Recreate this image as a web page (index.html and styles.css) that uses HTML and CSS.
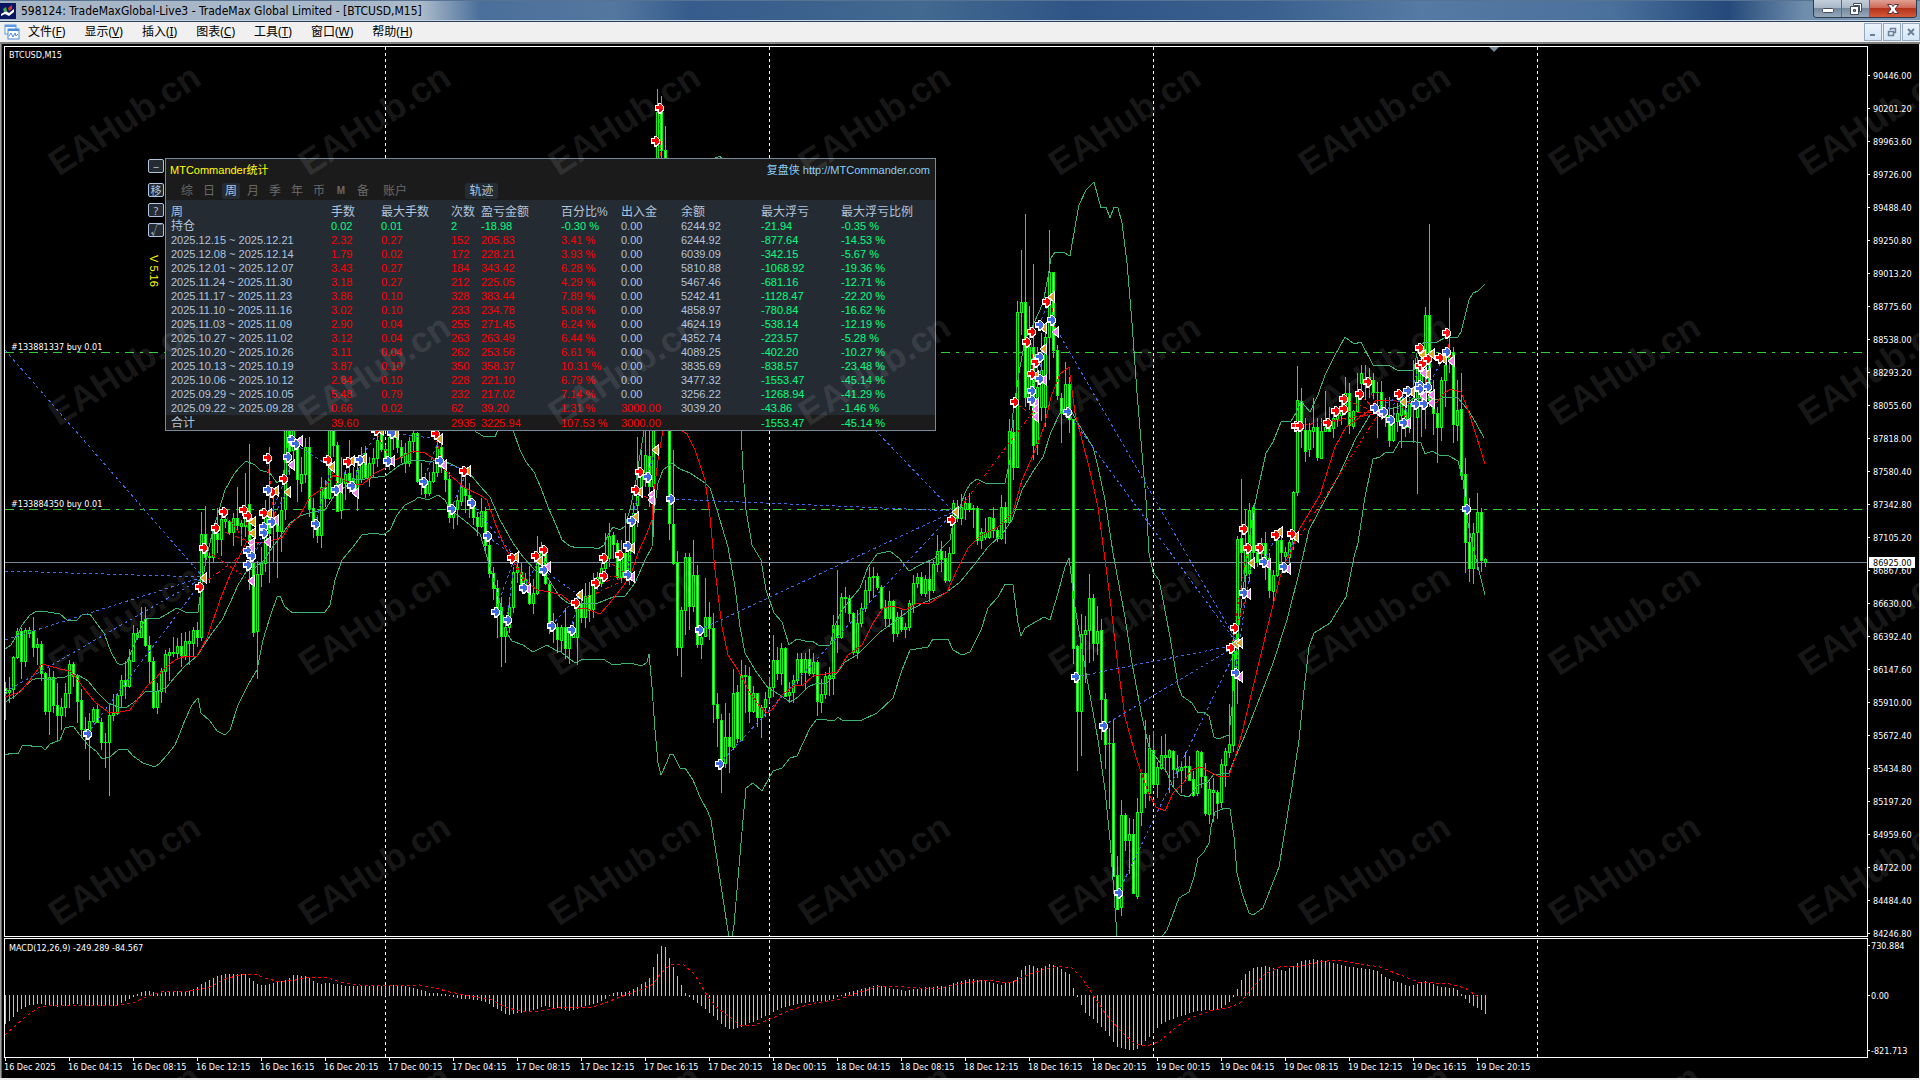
FILE: index.html
```html
<!DOCTYPE html>
<html lang="zh-CN">
<head>
<meta charset="utf-8">
<title>598124: TradeMaxGlobal-Live3 - TradeMax Global Limited - [BTCUSD,M15]</title>
<link rel="stylesheet" href="styles.css">
</head>
<body>
<header class="titlebar">
  <svg class="app-icon" width="16" height="16" viewBox="0 0 16 16" aria-hidden="true"><rect width="16" height="16" fill="#0b1560"/><path d="M1 11l5-3 3 2 5-4v3l-5 4-4-2-4 2z" fill="#fff"/><path d="M3 6l3-2 1 4-3 1z" fill="#3fb54a"/><path d="M8 5l4-3v4l-3 2z" fill="#d33"/></svg>
  <h1 class="title">598124: TradeMaxGlobal-Live3 - TradeMax Global Limited - [BTCUSD,M15]</h1>
  <div class="win-buttons">
    <button class="win-btn" aria-label="最小化"><svg width="14" height="14" viewBox="0 0 14 14"><rect x="1.500" y="6.500" width="11" height="4" rx="1" fill="#fff" stroke="#444b5c"/></svg></button>
    <button class="win-btn" aria-label="还原"><svg width="14" height="14" viewBox="0 0 14 14"><path d="M4.500 1.500h8v8h-2v-6h-6z" fill="#fff" stroke="#444b5c"/><path d="M1.500 4.500h8v8h-8zM4.500 7.500v2h2v-2z" fill="#fff" fill-rule="evenodd" stroke="#444b5c"/></svg></button>
    <button class="win-btn win-close" aria-label="关闭"><svg width="14" height="14" viewBox="0 0 14 14"><path d="M1.500 2.500h4L7 4.500l1.500-2h4L9 7l3.500 4.500h-4L7 9.500l-1.500 2h-4L5 7z" fill="#fff" stroke="#4a3540"/></svg></button>
  </div>
</header>
<nav class="menubar">
  <svg class="doc-icon" width="16" height="16" viewBox="0 0 16 16" aria-hidden="true"><rect x="1" y="1" width="11" height="9" fill="#fff" stroke="#5a9ae0"/><path d="M1 2h11" stroke="#5a9ae0" stroke-width="2"/><rect x="4" y="5" width="11" height="10" fill="#fff" stroke="#4a8cd8"/><path d="M4 6h11" stroke="#4a8cd8" stroke-width="2"/><path d="M5 12l2-3 2 4 2-4 1 3 2-2" fill="none" stroke="#4a8cd8"/></svg>
  <button class="menu">文件(<u>F</u>)</button>
  <button class="menu">显示(<u>V</u>)</button>
  <button class="menu">插入(<u>I</u>)</button>
  <button class="menu">图表(<u>C</u>)</button>
  <button class="menu">工具(<u>T</u>)</button>
  <button class="menu">窗口(<u>W</u>)</button>
  <button class="menu">帮助(<u>H</u>)</button>
  <div class="mdi-buttons">
    <button class="mdi-btn" aria-label="最小化图表"><svg width="10" height="10" viewBox="0 0 10 10"><path d="M2 8h5" stroke="#6b8096" stroke-width="2"/></svg></button>
    <button class="mdi-btn" aria-label="还原图表"><svg width="10" height="10" viewBox="0 0 10 10"><path d="M3.500 3V1.500h5v4H7M1.500 4.500h5v4h-5z" fill="none" stroke="#6b8096" stroke-width="1.500"/></svg></button>
    <button class="mdi-btn" aria-label="关闭图表"><svg width="10" height="10" viewBox="0 0 10 10"><path d="M2 2l6 6M8 2L2 8" stroke="#6b8096" stroke-width="2"/></svg></button>
  </div>
</nav>
<main class="workspace">
  <svg id="chart" class="chart" viewBox="0 44 1920 1036" role="img" aria-label="BTCUSD M15"></svg>
  <aside class="side-tools">
    <button class="tool">−</button>
    <button class="tool tool-move">移</button>
    <button class="tool">?</button>
    <button class="tool">√</button>
    <span class="version">V 5.16</span>
  </aside>
  <section class="panel">
    <div class="panel-head">
      <h2 class="panel-title">MTCommander统计</h2>
      <a class="panel-link" href="http://MTCommander.com">复盘侠 http://MTCommander.com</a>
    </div>
    <div class="tabs">
      <button class="tab">综</button><button class="tab">日</button><button class="tab tab-on">周</button><button class="tab">月</button><button class="tab">季</button><button class="tab">年</button><button class="tab">币</button><button class="tab tab-latin">M</button><button class="tab">备</button><button class="tab tab-wide">账户</button>
      <button class="tab tab-on tab-track">轨迹</button>
    </div>
    <table class="stats">
      <colgroup><col class="w160"><col class="w50"><col class="w70"><col class="w30"><col class="w80"><col class="w60"><col class="w60"><col class="w80"><col class="w80"><col></colgroup>
      <thead><tr><th>周</th><th>手数</th><th>最大手数</th><th>次数</th><th>盈亏金额</th><th>百分比%</th><th>出入金</th><th>余额</th><th>最大浮亏</th><th>最大浮亏比例</th></tr></thead>
      <tbody id="stats-body"></tbody>
      <tfoot><tr><td>合计</td><td class="up">39.60</td><td></td><td class="up">2935</td><td class="up">3225.94</td><td class="up">107.53 %</td><td class="up">3000.00</td><td></td><td class="down">-1553.47</td><td class="down">-45.14 %</td></tr></tfoot>
    </table>
  </section>
  <svg id="watermark" class="watermark" viewBox="0 44 1920 1036" aria-hidden="true"></svg>
</main>
<script src="chart.js"></script>
</body>
</html>
```
FILE: styles.css
```css
* { box-sizing: border-box; }
body {
  margin: 0;
  background: #000;
  font-family: "Noto Sans", "Noto Sans CJK SC", sans-serif;
  font-size: 12px;
  overflow-x: hidden;
}
button { font: inherit; padding: 0; border: 0; background: none; cursor: pointer; }

.titlebar {
  display: flex;
  align-items: center;
  height: 22px;
  border-bottom: 1px solid #2b3f58;
  box-shadow: inset 0 -1px #c5d3e2, inset 0 1px #587391;
  background: linear-gradient(90deg, #a5b5c6 0, #a9b9ca 22%, #4a6f9a 25%, #54779f 32%, #355c8c 36%, #42698f 48%, #2f5587 56%, #3a608f 66%, #557aa3 74%, #4a709c 84%, #24497a 90%, #6f8eac 94%, #7c98b3 100%);
}
.app-icon { margin-right: 5px; }
.title { flex: 1; margin: 0; font: 400 12px/20px "DejaVu Sans Condensed", "DejaVu Sans", sans-serif; color: #000; white-space: nowrap; }
.win-buttons { display: flex; align-self: flex-start; height: 18px; margin-right: 3px; border: 1px solid #2c3b4f; border-top: 0; border-radius: 0 0 4px 4px; overflow: hidden; }
.win-btn { display: flex; align-items: center; justify-content: center; width: 28px; border-right: 1px solid #5a6c80; background: linear-gradient(#c3cfdb, #a9b8c8 45%, #75899f 50%, #96a8ba); }
.win-close { width: 46px; border-right: 0; background: linear-gradient(#dfa093, #d0695a 45%, #b3331b 50%, #d4583a); }

.menubar { display: flex; align-items: center; height: 22px; padding-left: 4px; background: #f0f0f0; border-bottom: 2px solid #808080; color: #000; }
.doc-icon { margin-right: 8px; }
.menu { margin-right: 19px; line-height: 20px; }
.mdi-buttons { display: flex; gap: 1px; margin-left: auto; }
.mdi-btn { display: flex; align-items: center; justify-content: center; width: 18px; height: 18px; border: 1px solid #96a8bd; background: linear-gradient(#eaf3fc, #d5e6f8); }

.workspace { position: relative; }
.chart, .watermark { display: block; width: 100%; }
.watermark { position: absolute; inset: 0; pointer-events: none; }
.watermark text { font: 700 36px "Liberation Sans", sans-serif; fill: #fff; fill-opacity: .1; text-anchor: middle; }
.axis-text { font: 9px "DejaVu Sans Condensed", "DejaVu Sans", sans-serif; fill: #fff; }
.axis-now { fill: #000; }

.side-tools { position: absolute; left: 148px; top: 115px; display: flex; flex-direction: column; width: 16px; gap: 6px; color: #b0c4de; }
.tool { height: 14px; border: 1px solid #b0c4de; border-radius: 2px; background: #252b33; color: #b0c4de; font-size: 11px; line-height: 11px; }
.tool-move { margin-top: 4px; }
.version { margin-top: 12px; writing-mode: vertical-rl; color: #ff0; font: 11px/20px "Liberation Sans", sans-serif; }

.panel {
  position: absolute;
  left: 165px;
  top: 114px;
  width: 771px;
  border: 1px solid #778899;
  background: #1b1b1b;
  color: #b0c4de;
  font: 11px/14px "Liberation Sans", "Noto Sans CJK SC", sans-serif;
}
.panel-head { display: flex; justify-content: space-between; align-items: center; height: 22px; padding: 0 5px 0 4px; }
.panel-title { margin: 0; font-size: 11px; font-weight: 400; color: #ff0; }
.panel-link { color: #87cefa; font-size: 11px; text-decoration: none; }
.tabs { display: flex; height: 19px; padding: 2px 0 1px 12px; gap: 4px; }
.tab { width: 18px; height: 16px; color: #696969; font-size: 12px; line-height: 16px; white-space: nowrap; }
.tab-latin { font-size: 10px; font-weight: 700; }
.tab-wide { width: 34px; margin-left: 2px; }
.tab-on { background: #252b33; color: #b0c4de; border-radius: 2px; }
.tab-track { width: 33px; margin-left: 49px; }
.stats { width: 100%; table-layout: fixed; border-collapse: collapse; }
.stats th, .stats td { height: 14px; padding: 0; line-height: 14px; text-align: left; white-space: nowrap; font-weight: 400; }
.stats th { padding-top: 5px; font-size: 12px; }
.stats tr > :first-child { padding-left: 5px; }
.stats thead, .stats tbody { background: #252b33; }
.stats tfoot { background: #1b1b1b; }
.stats tfoot td { padding-top: 1px; }
.stats .cjk, .stats tfoot td:first-child { font-size: 12px; }
.up { color: #f00; }
.down { color: #00ff7f; }
.w160 { width: 165px; } .w50 { width: 50px; } .w70 { width: 70px; } .w30 { width: 30px; } .w80 { width: 80px; } .w60 { width: 60px; }
```
FILE: chart.js
```js
const NS = 'http://www.w3.org/2000/svg';
const chart = document.getElementById('chart');

function add(parent, tag, attrs, text) {
  const el = document.createElementNS(NS, tag);
  for (const k in attrs) el.setAttribute(k, attrs[k]);
  if (text !== undefined) el.textContent = text;
  parent.appendChild(el);
  return el;
}
const label = (x, y, text, cls = 'axis-text') => add(chart, 'text', { x, y, class: cls }, text);
const box = (x, y, w, h) => `M${x} ${y}h${w}v${h}h${-w}z`;

/* Statistics rows: period, lots, max lots, trades, profit, percent, deposit, balance, drawdown, drawdown % */
const stats = `持仓|0.02|0.01|2|-18.98|-0.30 %|0.00|6244.92|-21.94|-0.35 %
2025.12.15 ~ 2025.12.21|2.32|0.27|152|205.83|3.41 %|0.00|6244.92|-877.64|-14.53 %
2025.12.08 ~ 2025.12.14|1.79|0.02|172|228.21|3.93 %|0.00|6039.09|-342.15|-5.67 %
2025.12.01 ~ 2025.12.07|3.43|0.27|184|343.42|6.28 %|0.00|5810.88|-1068.92|-19.36 %
2025.11.24 ~ 2025.11.30|3.18|0.27|212|225.05|4.29 %|0.00|5467.46|-681.16|-12.71 %
2025.11.17 ~ 2025.11.23|3.86|0.10|328|383.44|7.89 %|0.00|5242.41|-1128.47|-22.20 %
2025.11.10 ~ 2025.11.16|3.02|0.10|233|234.78|5.08 %|0.00|4858.97|-780.84|-16.62 %
2025.11.03 ~ 2025.11.09|2.90|0.04|255|271.45|6.24 %|0.00|4624.19|-538.14|-12.19 %
2025.10.27 ~ 2025.11.02|3.12|0.04|263|263.49|6.44 %|0.00|4352.74|-223.57|-5.28 %
2025.10.20 ~ 2025.10.26|3.11|0.04|262|253.56|6.61 %|0.00|4089.25|-402.20|-10.27 %
2025.10.13 ~ 2025.10.19|3.87|0.10|350|358.37|10.31 %|0.00|3835.69|-838.57|-23.48 %
2025.10.06 ~ 2025.10.12|2.84|0.10|228|221.10|6.79 %|0.00|3477.32|-1553.47|-45.14 %
2025.09.29 ~ 2025.10.05|5.48|0.79|232|217.02|7.14 %|0.00|3256.22|-1268.94|-41.29 %
2025.09.22 ~ 2025.09.28|0.66|0.02|62|39.20|1.31 %|3000.00|3039.20|-43.86|-1.46 %`;
const tbody = document.getElementById('stats-body');
stats.split('\n').forEach((line, r) => {
  const tr = tbody.insertRow();
  line.split('|').forEach((v, c) => {
    const td = tr.insertCell();
    td.textContent = v;
    if (c === 0 && r === 0) td.className = 'cjk';
    else if (c > 7 || (r === 0 && c > 0 && c < 6)) td.className = 'down';
    else if ((c > 0 && c < 6) || (c === 6 && v !== '0.00')) td.className = 'up';
  });
});

/* Frame */
add(chart, 'path', { d: 'M0 44h1920v1036h-1920z', fill: '#000' });
add(chart, 'path', { d: box(0, 44, 1, 1036), fill: '#a0a0a0' });
add(chart, 'path', { d: box(1, 44, 1, 1036), fill: '#606060' });
add(chart, 'path', { d: box(1919, 44, 1, 1036) + box(0, 1078, 1920, 2), fill: '#e8e8e8' });
const defs = add(chart, 'defs', {});
add(add(defs, 'clipPath', { id: 'plot' }), 'path', { d: box(5, 47, 1862, 889) });

/* Day separators and order levels */
for (const x of [385, 769, 1153, 1537])
  add(chart, 'path', { d: `M${x}.5 47V936M${x}.5 940V1057`, stroke: '#fff', 'stroke-dasharray': '3 3' });
for (const y of [352, 509])
  add(chart, 'path', { d: `M5 ${y}.5H1867`, stroke: '#32cd32', 'stroke-dasharray': '9 6 3 6' });
add(chart, 'path', { d: 'M5 562.5H1867', stroke: '#778899' });

const plot = add(chart, 'g', { 'clip-path': 'url(#plot)', 'shape-rendering': 'crispEdges', fill: 'none' });

/* Candles, one every 4 units: high, body top, body bottom, low; "d" marks a falling bar */
const candles = `682 688 693 720 d,677 690 692 703,656 657 689 699,628 631 657 659,628 631 661 679 d,628 630 661 667,627 630 633 638,617 631 647 657 d,638 644 647 665,641 644 673 681 d,672 673 711 715 d,668 677 711 735,671 677 705 713 d,683 705 715 740 d,698 707 715 730,683 693 707 717,660 664 693 708,662 664 676 687 d,674 676 701 723 d,689 700 729 737 d,717 729 732 749 d,713 721 731 780,707 709 721 723,703 709 722 723 d,718 722 742 750 d,733 742 742 768,703 715 742 796,694 713 715 721,693 695 713 715,675 680 695 708,661 680 686 699 d,649 660 686 688,625 633 661 662,628 633 637 640,607 621 637 638,607 619 645 647 d,636 645 661 684 d,657 661 707 709 d,683 691 707 714,668 671 691 703,650 654 671 693,648 652 655 681,637 652 653 657,638 646 653 660,633 646 655 667 d,632 641 655 660,631 641 643 665,627 630 643 657,622 630 637 647 d,512 534 637 641,506 534 557 563 d,552 556 557 583,528 533 557 563,508 533 539 553 d,510 519 539 556,515 519 521 528,520 521 532 535 d,513 518 532 546,487 518 525 530 d,520 523 526 546,473 513 526 537,444 504 543 590 d,561 563 632 637 d,561 574 631 679,547 563 574 587,500 517 563 572,447 512 533 583 d,490 517 520 563,515 517 531 578 d,497 510 531 552,415 425 509 520,415 420 451 475 d,415 422 450 460,440 445 479 502 d,457 474 483 492,438 447 474 483,437 447 508 517 d,498 508 523 538 d,515 523 535 543 d,477 487 535 548,480 487 498 507 d,415 420 498 500,415 420 445 457 d,442 445 511 512 d,457 478 510 519,470 474 483 500,440 473 480 493 d,467 478 488 492 d,463 470 488 511,447 458 479 483,446 453 477 478 d,457 463 477 487,448 458 463 477,428 440 458 467,429 430 449 452 d,445 449 463 468 d,427 437 463 470,425 430 437 450,430 433 447 453 d,440 447 457 463 d,443 453 463 473,437 441 463 467,430 433 441 453,432 433 481 483 d,463 481 483 495,473 484 493 498 d,472 481 493 496,462 472 481 483,440 447 472 477,443 447 467 473 d,463 467 479 492 d,472 479 517 523 d,503 509 517 529,495 500 509 525,472 487 501 506,473 488 495 513 d,483 495 505 518 d,500 506 517 525 d,512 517 526 536 d,498 511 526 528,507 511 545 550 d,537 545 573 578 d,567 573 588 600 d,580 588 608 638 d,597 607 636 667 d,620 627 636 663,597 607 627 633,567 572 607 613,558 567 572 583,563 572 585 592 d,573 579 587 593,566 587 603 605 d,579 593 603 614,536 563 593 595,542 553 563 568,547 549 583 585 d,582 584 624 634 d,613 624 628 643,623 627 639 653 d,625 627 640 652,608 627 648 659 d,627 633 648 664,622 628 637 638,593 602 637 665,600 603 617 623 d,583 596 617 628,582 595 610 622 d,573 583 609 618,572 577 584 590,563 568 583 587,533 558 568 575,523 536 558 567,532 535 544 559 d,540 543 577 580 d,540 553 577 583,513 553 575 578 d,520 543 577 585,503 513 543 547,437 492 505 527,450 473 492 498,425 455 472 487,425 456 486 507 d,420 430 486 537,89 112 400 425,96 112 150 400 d,126 150 300 400 d,425 428 523 540 d,450 524 563 565 d,551 562 647 656 d,607 610 647 677,553 557 610 635,553 557 606 630 d,540 575 606 612,565 575 644 648 d,630 637 644 659,578 617 636 637,602 617 628 640 d,613 628 704 723 d,693 704 718 747 d,714 720 763 793 d,703 737 763 768,713 737 746 773 d,669 693 747 750,685 692 738 743 d,660 675 740 741,665 675 676 713,667 676 711 723 d,686 693 711 713,693 693 717 727 d,705 707 717 738,692 699 707 717,677 687 697 703,635 660 687 697,647 660 673 680 d,643 648 673 685,647 648 696 697 d,682 692 695 703,675 680 692 703,653 659 680 684,653 659 672 685 d,653 659 672 690,649 659 673 676 d,653 662 673 677,660 662 701 716 d,679 694 702 713,672 676 694 699,667 675 678 696,615 625 678 695,570 625 637 653 d,593 597 637 639,587 597 598 613,595 598 613 622 d,612 613 652 655 d,610 623 652 659,603 608 623 627,580 590 608 612,567 577 590 603,567 576 577 598,573 576 587 590 d,585 587 608 610 d,600 608 618 627 d,591 601 618 627,600 601 633 642 d,612 617 633 637,610 617 629 632 d,623 627 629 638,600 603 627 631,575 583 604 613,573 577 583 588,572 577 593 596 d,575 579 593 597,560 579 590 602 d,560 564 590 593,535 551 564 572,541 551 559 572 d,551 558 580 583 d,547 553 580 582,500 503 553 554,500 507 518 522 d,494 507 518 525,497 503 509 520,493 503 509 512 d,505 508 509 528,506 508 540 545 d,528 532 540 549,518 532 537 540,517 517 537 539,507 518 530 538 d,527 530 538 542 d,495 507 538 540,502 507 522 544 d,419 431 522 523,420 432 467 480 d,301 312 467 468,250 302 312 335,214 302 397 407 d,306 347 397 410,264 347 445 460 d,347 387 443 455,333 370 407 421,330 337 407 427,230 272 337 380,272 272 350 358 d,345 350 395 400 d,393 398 413 443 d,362 384 413 417,377 384 419 433 d,419 419 648 664 d,645 646 711 771 d,614 634 711 756,616 630 634 683,574 598 630 663,594 598 643 661 d,606 631 643 655,619 630 699 740 d,693 699 744 769 d,728 743 743 809,719 743 876 877 d,856 875 909 910 d,800 815 907 916,813 815 840 851 d,818 834 840 874,819 834 893 894 d,798 812 896 899,772 773 812 826,720 773 793 808 d,735 748 793 801,731 750 784 787 d,762 767 784 798,736 755 768 770,734 755 757 770,749 750 757 793,750 751 769 787 d,755 768 771 778,763 767 770 793,752 766 767 781,756 766 780 781 d,771 779 795 797 d,750 751 793 796,751 752 776 788 d,763 776 813 816 d,782 789 814 824,778 790 792 822,790 792 803 819 d,759 764 802 808,748 751 765 787,704 744 752 758,630 640 745 752,536 539 675 704,479 538 552 593 d,510 547 575 600,503 510 573 582,505 507 552 562 d,543 552 562 567 d,538 543 553 563,532 543 563 580 d,553 558 590 598 d,570 575 591 602,533 540 575 577,530 540 552 568 d,547 552 556 573,540 542 557 565,491 492 542 550,366 400 492 496,388 401 430 448 d,418 430 451 462 d,423 430 449 457,398 427 431 448,418 427 457 461 d,418 431 458 459,391 427 431 432,407 427 431 432 d,410 418 428 438,412 415 419 427,397 410 415 425,377 393 410 415,383 393 425 434 d,410 411 426 429,373 393 411 413,365 373 383 400,365 380 382 400,368 377 383 398,373 380 392 400 d,382 392 392 438,381 392 410 420 d,398 410 417 427 d,397 415 440 447 d,407 420 440 442,403 413 421 432,393 397 415 448,400 410 427 437 d,397 403 427 433,360 398 403 443,357 367 417 494,347 360 397 437,307 315 367 429,224 315 400 407 d,380 400 413 435 d,407 413 427 463 d,377 380 427 441,357 365 380 407,298 357 360 373,347 352 424 443 d,380 410 425 441,373 409 475 480 d,458 474 542 573 d,498 542 568 582 d,523 533 568 584,493 512 532 570,508 512 560 572 d,558 559 562 567`;
let lime = '', black = '', white = '';
candles.split(',').forEach((row, i) => {
  const [h, t, b, l, d] = row.split(' ');
  const x = 5 + 4 * i, height = b - t;
  lime += box(x, +h, 1, l - h) + box(x - 1, +t, 3, height + 1);
  if (height > 1) {
    const hole = box(x, +t + 1, 1, height - 1);
    if (d) white += hole; else black += hole;
  }
});
add(plot, 'path', { d: lime, fill: '#0f0' });
add(plot, 'path', { d: black, fill: '#000' });
add(plot, 'path', { d: white, fill: '#fff' });

/* Bollinger bands and moving average */
const line = (points, attrs, parent = plot) => add(parent, 'polyline', { points, fill: 'none', 'shape-rendering': 'crispEdges', ...attrs });
const green = { stroke: '#3cb371' };
line('5,649 11,645 17,635 22,625 30,615 37,611 48,612 60,614 67,620 76,621 82,615 90,614 97,624 104,633 111,652 117,663 121,665 127,662 134,645 140,630 146,618 158,619 167,614 177,608 187,613 198,612 201,590 206,560 213,530 219,510 225,490 234,474 240,467 246,461 255,465 260,470 270,473 277,483 283,478 288,440 300,380 380,370 440,390 473,430 483,436 495,437 500,425 508,415 513,430 520,450 526,462 534,472 541,488 548,507 556,525 562,540 570,546 577,548 590,547 598,549 604,545 608,535 613,527 620,530 625,526 630,510 636,480 640,455 645,425 660,250 700,165 720,156 726,165 738,300 741,430 743,470 746,510 752,545 761,560 766,590 774,613 782,622 789,645 797,639 805,641 812,641 818,645 830,645 835,625 842,610 850,600 860,588 868,567 877,554 890,551 900,559 909,571 920,565 935,558 942,548 950,540 953,522 957,515 965,493 970,484 977,479 985,483 1005,483 1010,460 1013,413 1020,367 1025,340 1034,323 1043,303 1048,277 1051,258 1055,252 1063,252 1070,256 1075,227 1079,205 1086,190 1094,182 1101,208 1106,207 1110,218 1114,207 1118,208 1122,223 1127,263 1132,323 1137,393 1142,453 1146,500 1149,553 1153,572 1159,580 1163,600 1170,637 1178,685 1182,696 1192,703 1198,713 1203,712 1209,716 1214,737 1218,739 1229,735 1232,707 1235,660 1240,617 1245,573 1253,513 1260,480 1266,453 1273,442 1281,422 1291,421 1296,413 1301,401 1310,412 1318,395 1325,375 1334,357 1345,337 1354,344 1361,342 1373,365 1390,366 1397,370 1414,370 1418,347 1425,342 1437,342 1446,337 1458,337 1461,332 1469,300 1473,293 1478,291 1485,284', green);
line('5,702 14,697 24,687 32,680 38,678 50,680 57,678 65,677 72,674 80,676 88,681 97,692 108,703 118,707 127,707 137,700 146,691 158,691 166,688 175,677 185,666 197,656 210,636 222,620 230,603 238,585 246,572 256,567 264,560 272,548 280,537 290,523 300,516 312,512 325,510 336,493 348,485 356,479 365,479 378,477 385,476 400,465 410,461 420,460 430,462 440,459 455,466 470,474 480,486 490,497 500,520 513,543 523,557 535,570 547,577 560,597 568,603 580,604 598,603 613,597 625,596 635,583 645,560 652,547 653,520 658,483 663,470 672,463 680,469 690,473 705,483 710,488 717,510 728,547 735,587 740,627 745,653 755,670 768,688 780,695 790,702 798,697 808,687 817,683 827,683 837,673 845,662 857,655 870,642 880,632 893,623 907,612 923,603 937,597 947,592 960,582 974,565 988,547 1003,533 1012,520 1022,490 1032,473 1043,457 1051,432 1060,413 1069,407 1079,425 1093,447 1098,467 1105,500 1113,553 1118,580 1125,617 1132,663 1142,717 1149,747 1158,760 1167,773 1173,787 1180,795 1189,797 1198,785 1208,782 1213,775 1229,773 1235,758 1246,733 1260,697 1273,663 1287,620 1299,573 1309,530 1325,500 1339,475 1356,438 1370,415 1384,410 1397,407 1415,398 1428,398 1437,400 1446,397 1458,398 1468,410 1476,423 1484,438', green);
line('5,755 12,753 18,754 22,746 28,745 35,747 41,746 45,750 50,744 60,740 65,728 73,726 80,735 88,745 97,752 102,759 110,757 118,750 127,749 133,756 143,763 155,767 160,763 167,755 175,745 180,733 185,720 192,705 198,698 201,713 210,721 217,731 225,735 230,730 238,705 248,685 257,670 263,640 270,617 277,597 280,596 285,607 293,613 300,612 325,612 330,605 335,580 342,560 352,548 362,535 375,533 383,535 390,530 397,515 405,505 415,500 418,497 428,500 438,495 445,500 450,510 460,517 470,525 480,534 490,567 500,603 508,635 512,641 523,645 533,652 547,645 555,650 561,652 575,663 583,659 603,659 613,665 630,663 642,666 647,662 649,654 652,687 655,730 658,763 661,775 667,762 670,754 673,754 680,768 685,768 693,780 700,797 708,812 711,820 727,925 729,937 732,937 734,925 743,820 746,788 753,783 762,791 768,780 773,771 782,768 790,758 797,756 810,728 817,719 827,720 834,721 838,717 843,721 862,720 877,713 893,698 902,670 910,650 928,647 933,639 948,639 953,650 962,655 970,652 981,630 988,608 998,597 1005,584 1013,585 1018,623 1021,636 1025,628 1044,617 1050,620 1058,593 1065,567 1069,558 1075,607 1086,673 1098,740 1105,790 1110,840 1113,880 1117,936 1118,950 1155,950 1163,935 1167,930 1172,917 1179,898 1189,892 1194,877 1198,858 1204,852 1209,843 1211,827 1215,812 1225,808 1230,809 1234,837 1237,873 1242,893 1249,913 1253,915 1263,908 1270,890 1279,867 1285,830 1292,787 1299,740 1304,690 1309,647 1314,633 1330,623 1346,597 1354,557 1358,543 1365,497 1370,473 1373,459 1380,457 1386,452 1393,453 1399,442 1411,441 1421,443 1425,454 1432,451 1439,455 1449,456 1458,461 1463,480 1468,523 1473,547 1485,595', green);
line('5,697 20,692 30,680 42,664 50,666 60,669 70,671 78,680 85,690 95,702 108,712 120,712 130,710 137,700 147,686 155,679 165,668 175,660 185,656 197,656 207,638 220,600 230,575 240,555 247,541 262,543 270,541 282,538 290,525 300,515 310,497 325,487 333,475 340,477 350,484 362,485 375,473 385,468 395,460 405,455 413,451 425,453 435,460 450,475 465,488 480,495 487,500 495,523 505,547 517,567 525,580 537,590 550,592 562,595 570,602 577,608 587,609 600,614 608,605 620,590 630,577 638,553 647,533 652,520 653,500 658,460 663,430 672,300 681,430 687,434 695,450 705,480 710,517 715,570 722,627 728,655 738,670 750,693 760,707 767,713 772,710 782,695 795,685 803,685 813,676 837,672 848,655 862,645 873,623 883,608 893,606 905,610 917,603 930,603 947,592 957,570 968,548 981,535 998,527 1013,512 1022,480 1034,453 1044,427 1051,397 1060,374 1069,367 1075,413 1089,467 1098,507 1106,567 1111,607 1118,667 1125,717 1136,757 1148,792 1156,807 1165,811 1173,793 1184,782 1191,770 1201,767 1208,771 1220,777 1229,776 1235,758 1242,733 1253,687 1270,617 1280,577 1285,563 1292,550 1299,530 1320,495 1335,447 1346,427 1356,420 1370,410 1375,401 1387,400 1404,402 1437,402 1444,393 1451,389 1461,392 1468,410 1476,435 1485,464', { stroke: '#f00' });

/* Links between entry and exit of each trade */
const links = list => list.split(' ').map(s => { const [a, b, c, d] = s.split(','); return `M${a} ${b}L${c} ${d}`; }).join('');
add(plot, 'path', { stroke: '#4169e1', 'stroke-dasharray': '3 3', d: links('5,350,203,577 5,571,203,577 5,640,203,577 5,692,203,578 87,734,203,580 247,565,275,520 251,556,287,492 263,533,291,465 295,444,331,467 315,524,331,467 335,490,351,461 351,486,363,459 359,460,380,430 391,433,439,439 423,482,439,439 439,461,467,471 451,509,467,471 471,503,515,557 487,536,515,557 495,612,515,557 507,620,515,557 523,588,539,561 543,570,579,595 551,626,579,595 571,630,579,595 627,575,631,548 631,521,639,492 647,477,655,450 670,499,953,511 699,630,953,512 719,764,953,513 875,430,953,511 1039,325,1051,297 1039,379,1043,349 1051,320,1236,640 1067,412,1236,642 1075,677,1236,645 1103,726,1236,646 1118,893,1236,650 1235,673,1251,563 1263,562,1279,532 1283,567,1295,537 1374,408,1411,392 1383,412,1411,392 1390,420,1403,402 1403,423,1422,355 1423,404,1431,354 1427,387,1443,359') });
add(plot, 'path', { stroke: '#f00', 'stroke-dasharray': '4 3 1 3', d: links('203,548,251,581 199,587,251,548 215,528,251,543 223,512,251,548 243,510,251,543 267,458,275,520 327,460,339,488 375,430,391,461 435,434,443,465 511,558,527,589 543,550,547,567 575,603,631,577 595,583,631,577 603,558,631,577 603,576,631,577 635,490,651,500 951,520,1035,409 1014,402,1035,417 659,108,662,200 1031,332,1035,417 1051,297,1055,332 1230,648,1247,594 1234,628,1247,550 1259,548,1267,564 1299,426,1379,413 1327,423,1379,413 1291,550,1379,413 1335,411,1379,413 1343,399,1379,413 1359,394,1379,413 1367,382,1379,413 1398,394,1407,423 1419,348,1431,403 1446,333,1451,361') });

/* Trade markers */
const exits = (list, fill) => list.split(' ').forEach(p => { const [x, y] = p.split(',').map(Number); add(plot, 'path', { d: `M${x + 3} ${y - 5}v10L${x - 3} ${y}z`, fill, stroke: '#fff' }); });
const entries = (list, color) => list.split(' ').forEach(p => {
  const [x, y] = p.split(',').map(Number);
  add(plot, 'path', { d: `M${x - 4} ${y - 3}h3v-2h2l4 4v3l-4 4h-2v-3h-3z`, fill: '#fff' });
  add(plot, 'path', { d: `M${x - 3} ${y - 2}h3v-2h1l3 3v2l-3 3h-1v-3h-3z`, fill: color });
});
exits('203,578 252,522 252,533 268,514 275,491 287,492 331,467 351,461 363,459 395,434 380,430 439,439 467,471 515,557 539,561 579,595 631,548 635,517 639,492 655,450 955,512 1051,297 1043,328 1043,349 1035,376 1251,563 1279,532 1295,537 1403,402 1411,392 1422,355 1431,354 1427,374 1443,359 1235,644 1239,643', '#daa520');
exits('251,543 251,548 251,581 267,542 275,520 291,465 299,441 339,488 355,493 391,461 443,465 527,589 547,567 631,577 651,495 651,500 1055,332 1043,380 1035,403 1035,409 1035,417 1267,564 1287,569 1379,413 1407,423 1423,373 1423,396 1431,395 1431,403 1451,361 1247,594 1239,677', '#ee82ee');
entries('203,548 199,587 215,528 223,512 243,510 247,516 263,513 267,458 271,492 283,479 327,460 347,462 375,430 435,434 463,471 511,558 535,556 543,550 575,603 595,583 603,558 603,576 619,555 635,490 639,472 951,520 659,108 655,141 1014,402 1026,342 1031,332 1035,362 1031,374 1046,302 1243,529 1247,548 1259,548 1275,535 1291,534 1295,426 1299,426 1327,423 1335,411 1343,409 1343,399 1359,394 1367,382 1398,394 1419,348 1419,366 1422,363 1427,359 1439,358 1446,333 1234,628 1230,648', '#f00');
entries('87,734 247,551 251,556 247,565 263,527 263,533 267,490 271,522 287,457 291,440 295,444 315,524 335,490 351,486 359,460 387,461 391,433 423,482 439,461 451,509 471,503 487,536 495,612 523,588 543,570 507,620 551,626 571,630 627,546 627,575 631,521 647,477 670,499 699,630 719,764 1039,325 1051,320 1039,357 1031,391 1031,400 1039,379 1067,412 1263,562 1283,567 1374,408 1383,412 1390,420 1403,423 1407,391 1415,404 1423,404 1419,385 1419,389 1427,387 1446,352 1466,509 1075,677 1103,726 1118,893 1235,673 1243,593', '#4169e1');

/* MACD histogram and signal */
const macd = '5,1023 12,1017 20,1008 30,1004 40,1003 57,1006 75,1003 90,1005 115,1005 128,999 135,995 140,992 147,990 155,993 175,991 190,991 205,982 215,977 225,974 245,974 255,983 262,985 275,983 285,980 293,975 305,976 318,984 330,983 345,986 375,986 400,985 415,988 430,993 445,994 455,997 475,999 485,1001 497,1008 507,1014 520,1012 535,1009 543,1005 560,1008 570,1010 585,1005 600,1001 612,993 630,991 645,982 649,978 653,967 657,954 661,946 665,947 669,958 675,972 685,993 695,1000 705,1008 720,1022 730,1029 740,1026 755,1020 765,1015 780,1007 800,1002 830,999 845,993 860,989 875,985 890,988 905,991 925,987 945,986 960,981 970,979 985,981 1000,985 1015,980 1023,967 1030,965 1040,969 1050,963 1060,968 1070,975 1073,988 1078,998 1085,1012 1095,1020 1105,1030 1117,1046 1130,1049 1137,1048 1150,1035 1160,1023 1175,1017 1195,1010 1220,1008 1228,1002 1235,993 1243,976 1253,968 1265,966 1285,971 1300,961 1313,959 1330,962 1350,967 1375,970 1390,980 1410,986 1425,981 1440,987 1455,988 1462,995 1470,1003 1480,1008 1485,1013'.split(' ').map(p => p.split(',').map(Number));
let bars = '', k = 0;
for (let x = 5; x <= 1485; x += 4) {
  while (k < macd.length - 2 && macd[k + 1][0] < x) k++;
  const [a, b] = [macd[k], macd[k + 1]];
  const y = Math.round(a[1] + (b[1] - a[1]) * (x - a[0]) / (b[0] - a[0]));
  bars += y < 995 ? box(x, y, 1, 996 - y) : box(x, 995, 1, y - 994);
}
add(chart, 'path', { d: bars, fill: '#c0c0c0' });
line('5,1035 15,1026 25,1017 38,1008 50,1005 120,1005 135,1002 148,996 165,991 190,991 210,987 225,979 240,975 255,974 265,978 280,982 295,980 310,977 325,977 340,982 360,985 380,986 420,985 435,988 450,992 465,995 490,999 505,1007 520,1011 535,1012 560,1007 590,1008 605,1003 625,995 640,990 653,984 660,974 670,965 683,964 695,975 705,992 715,1006 728,1016 740,1025 755,1025 775,1017 790,1010 815,1003 840,999 860,992 880,986 905,987 935,989 960,984 985,980 1010,983 1030,974 1045,969 1058,966 1072,968 1082,978 1093,995 1105,1013 1120,1030 1135,1044 1148,1046 1160,1041 1175,1028 1190,1018 1210,1011 1230,1007 1240,1003 1253,987 1265,974 1280,967 1300,966 1320,962 1335,960 1355,963 1380,967 1400,975 1418,982 1450,984 1465,988 1480,998', { stroke: '#f00', 'stroke-dasharray': '3 3' }, chart);

/* Borders and axes */
let frame = box(4, 46, 1864, 1) + box(4, 936, 1864, 1) + box(4, 938, 1864, 1) + box(4, 1057, 1864, 1) + box(4, 46, 1, 891) + box(4, 938, 1, 120) + box(1867, 46, 1, 891) + box(1867, 938, 1, 120);
const prices = '90446.00 90201.20 89963.60 89726.00 89488.40 89250.80 89013.20 88775.60 88538.00 88293.20 88055.60 87818.00 87580.40 87342.80 87105.20 86867.60 86630.00 86392.40 86147.60 85910.00 85672.40 85434.80 85197.20 84959.60 84722.00 84484.40 84246.80'.split(' ');
prices.forEach((p, i) => { label(1873, 79 + 33 * i, p); frame += box(1868, 75 + 33 * i, 2, 1); });
for (const [y, t] of [[949, '730.884'], [999, '0.00'], [1054, '-821.713']]) { label(1871, y, t); frame += box(1868, y - 4, 2, 1); }
const hours = ['00:15', '04:15', '08:15', '12:15', '16:15', '20:15'];
for (let i = 0; i < 24; i++) {
  label(4 + 64 * i, 1070, `${16 + Math.floor(i / 6)} Dec ${i ? hours[i % 6] : '2025'}`);
  frame += box(5 + 64 * i, 1058, 1, 3);
}
add(chart, 'path', { d: frame, fill: '#fff' });
add(chart, 'path', { d: 'M1489 47h10l-5 5z', fill: '#778899' });
add(chart, 'path', { d: box(1869, 557, 46, 11), fill: '#fff' });
label(1873, 566, '86925.00', 'axis-text axis-now');
label(9, 58, 'BTCUSD,M15');
label(9, 951, 'MACD(12,26,9) -249.289 -84.567');
label(11, 350, '#133881337 buy 0.01');
label(11, 507, '#133884350 buy 0.01');

const mark = document.getElementById('watermark');
for (let r = 0; r < 5; r++)
  for (let c = 0; c < 8; c++)
    add(mark, 'text', { transform: `translate(${131 + 250 * c} ${130 + 250 * r}) rotate(-33)` }, 'EAHub.cn');
```
